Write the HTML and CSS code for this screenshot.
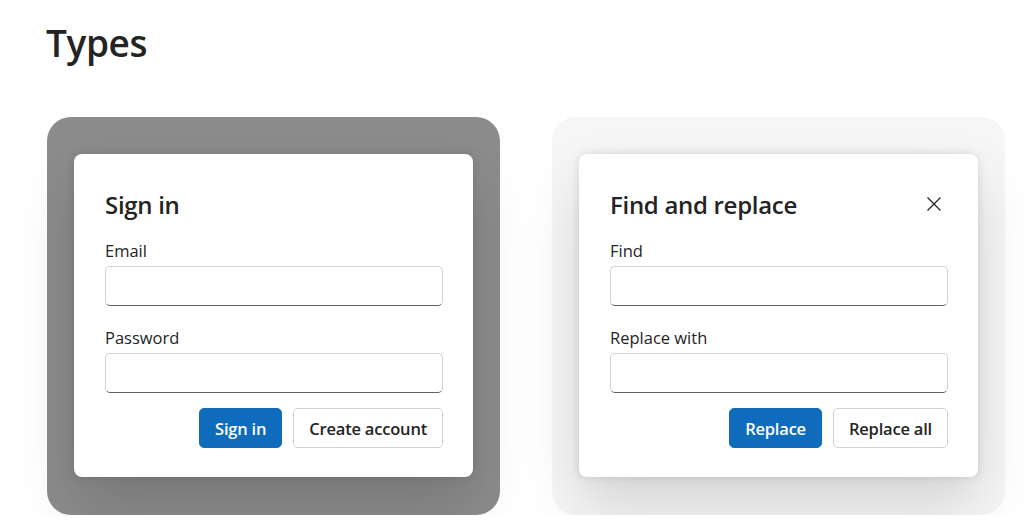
FILE: index.html
```html
<!DOCTYPE html>
<html lang="en">
<head>
  <meta charset="UTF-8">
  <title>Dialog types</title>
  <link rel="stylesheet" href="styles.css">
</head>
<body>
  <h1 class="page-title">Types</h1>
  <div class="examples">
    <!-- modal: dimmed backdrop behind the surface -->
    <div class="stage stage-modal">
      <div class="dialog">
        <h2 class="dialog-title">Sign in</h2>
        <div class="fields">
          <div class="field">
            <label class="field-label">Email</label>
            <input class="field-input" type="text">
          </div>
          <div class="field">
            <label class="field-label">Password</label>
            <input class="field-input" type="password">
          </div>
        </div>
        <div class="actions">
          <button class="btn btn-primary">Sign in</button>
          <button class="btn">Create account</button>
        </div>
      </div>
    </div>
    <!-- non-modal: no backdrop, close button in the header -->
    <div class="stage stage-nonmodal">
      <div class="dialog">
        <div class="dialog-head">
          <h2 class="dialog-title">Find and replace</h2>
          <button class="close" aria-label="Close">
            <svg width="20" height="20" viewBox="0 0 20 20"><path d="M3.5 3.5 16.5 16.5M16.5 3.5 3.5 16.5" stroke="#242424" stroke-width="1.3" fill="none"/></svg>
          </button>
        </div>
        <div class="fields">
          <div class="field">
            <label class="field-label">Find</label>
            <input class="field-input" type="text">
          </div>
          <div class="field">
            <label class="field-label">Replace with</label>
            <input class="field-input" type="text">
          </div>
        </div>
        <div class="actions">
          <button class="btn btn-primary">Replace</button>
          <button class="btn">Replace all</button>
        </div>
      </div>
    </div>
  </div>
</body>
</html>
```

FILE: styles.css
```css
body { margin: 0; padding: 0 0 0 46px; font-family: "Open Sans", "Noto Sans", sans-serif; color: #242424; background: #fff; }
.page-title { margin: 0; padding-top: 17px; height: 100px; font-size: 37px; font-weight: 600; line-height: 52px; letter-spacing: -0.4px; }
.examples { display: flex; gap: 52px; padding-left: 1px; }
.stage { width: 453px; height: 398px; border-radius: 24px; box-sizing: border-box; padding: 37px 27px 0; }
.stage-modal { background: #8c8c8c; }
.stage-nonmodal { background: #f6f6f6; }
.dialog { background: #fff; border-radius: 8px; height: 323px; box-sizing: border-box; padding: 30px 30px 30px 31px; box-shadow: 0 0 10px rgba(0,0,0,.12), 0 30px 60px rgba(0,0,0,.14); }
.dialog-head { display: flex; justify-content: space-between; align-items: center; }
.dialog-title { margin: 3px 0 16px; font-size: 24px; font-weight: 600; line-height: 35px; letter-spacing: -0.3px; }
.close { border: none; background: none; padding: 0; width: 25px; height: 25px; margin: 0 2px 14px 0; display: flex; align-items: center; justify-content: center; }
.fields { display: flex; flex-direction: column; gap: 19px; margin-bottom: 15px; }
.field { display: flex; flex-direction: column; }
.field-label { font-size: 16.5px; line-height: 25px; margin-bottom: 3px; }
.field-input { height: 40px; box-sizing: border-box; border: 1px solid #d1d1d1; border-bottom-color: #616161; border-radius: 5px; padding: 0 12px; font: inherit; }
.actions { display: flex; justify-content: flex-end; gap: 11px; }
.btn { height: 40px; padding: 0 15px; border: 1px solid #d1d1d1; border-radius: 5px; background: #fff; color: #242424; font-family: inherit; font-size: 16.5px; font-weight: 600; letter-spacing: -0.2px; }
.btn-primary { background: #0f6cbd; border-color: #0f6cbd; color: #fff; }
```
